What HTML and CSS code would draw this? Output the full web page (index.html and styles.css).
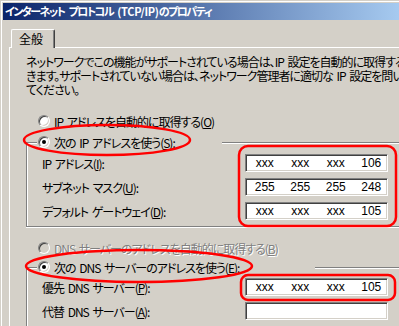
FILE: index.html
```html
<!DOCTYPE html>
<html lang="ja">
<head>
<meta charset="utf-8">
<link rel="stylesheet" href="styles.css">
</head>
<body>
<div class="window">
    <div class="titlebar">インターネット プロトコル <span class="latin">(TCP/IP)</span>のプロパティ</div>

    <div class="tabs">
        <div class="tab">全般</div>
    </div>

    <div class="panel">
        <p class="intro">
            <span>ネットワークでこの機能がサポートされている場合は、IP 設定を自動的に取得することがで</span>
            <span>きます。サポートされていない場合は、ネットワーク管理者に適切な IP 設定を問い合わせ</span>
            <span>てください。</span>
        </p>

        <div class="option first">
            <span class="radio"></span>
            <span>IP アドレスを自動的に取得する(<u>O</u>)</span>
        </div>

        <div class="group">
            <div class="option legend ip-legend">
                <span class="radio checked"></span>
                <span>次の IP アドレスを使う(<u>S</u>):</span>
            </div>
            <div class="row top">
                <span class="label">IP アドレス(<u>I</u>):</span>
                <span class="ipfield"><span>xxx</span><span>xxx</span><span>xxx</span><span>106</span></span>
            </div>
            <div class="row">
                <span class="label">サブネット マスク(<u>U</u>):</span>
                <span class="ipfield"><span>255</span><span>255</span><span>255</span><span>248</span></span>
            </div>
            <div class="row">
                <span class="label">デフォルト ゲートウェイ(<u>D</u>):</span>
                <span class="ipfield"><span>xxx</span><span>xxx</span><span>xxx</span><span>105</span></span>
            </div>
        </div>

        <div class="option disabled">
            <span class="radio"></span>
            <span>DNS サーバーのアドレスを自動的に取得する(<u>B</u>)</span>
        </div>

        <div class="group dns">
            <div class="option legend dns-legend">
                <span class="radio checked"></span>
                <span>次の DNS サーバーのアドレスを使う(<u>E</u>):</span>
            </div>
            <div class="row top-dns">
                <span class="label">優先 DNS サーバー(<u>P</u>):</span>
                <span class="ipfield"><span>xxx</span><span>xxx</span><span>xxx</span><span>105</span></span>
            </div>
            <div class="row">
                <span class="label">代替 DNS サーバー(<u>A</u>):</span>
                <span class="ipfield"></span>
            </div>
        </div>
    </div>
</div>

<!-- red hand-drawn marks over the dialog -->
<svg class="marks" width="399" height="326" viewBox="0 0 399 326">
    <ellipse cx="107" cy="140" rx="83" ry="15"/>
    <rect x="239" y="146" width="157" height="80" rx="9"/>
    <ellipse cx="139" cy="266" rx="113" ry="16"/>
    <rect x="241" y="275" width="154" height="25" rx="7"/>
</svg>
</body>
</html>
```

FILE: styles.css
```css
body {
    margin: 0;
    width: 399px;
    height: 326px;
    overflow: hidden;
    position: relative;
    background-color: #d4d0c8;
    color: #000;
    font-family: "Noto Sans CJK JP", sans-serif;
    font-size: 12px;
    letter-spacing: -1px;
    word-spacing: 2px;
    font-feature-settings: "palt";
}

.window {
    margin: 1px 0 0 1px;
    padding: 1px 0 0 1px;
    border-top: 1px solid #fff;
    border-left: 1px solid #fff;
}

.titlebar {
    height: 17px;
    line-height: 17px;
    padding-left: 2px;
    color: #fff;
    font-size: 11px;
    font-weight: bold;
    letter-spacing: -1.5px;
    word-spacing: 3px;
    white-space: nowrap;
    background: linear-gradient(to right, #0a246a, #a6caf0);
}

.titlebar .latin {
    letter-spacing: -0.3px;
}

.tabs {
    display: flex;
    padding: 9px 0 0 8px;
}

.tab {
    position: relative;
    z-index: 1;
    box-sizing: border-box;
    width: 44px;
    height: 19px;
    margin-bottom: -1px;
    padding: 2px 0 0 7px;
    line-height: 14px;
    letter-spacing: 0;
    background-color: #d4d0c8;
    border-top: 1px solid #fff;
    border-left: 1px solid #fff;
    border-right: 1px solid #404040;
    border-radius: 2px 2px 0 0;
    box-shadow: inset -1px 0 0 #808080;
}

.panel {
    width: 500px;
    margin-left: 6px;
    padding: 7px 0 0 16px;
    border-top: 1px solid #fff;
    border-left: 1px solid #fff;
}

.intro {
    margin: 0;
    line-height: 14px;
    white-space: nowrap;
}

.intro span {
    display: block;
}

.option {
    display: flex;
    align-items: center;
    gap: 4px;
    height: 20px;
    margin-left: 12px;
    white-space: nowrap;
}

.option.first {
    margin-top: 14px;
}

.option.disabled {
    margin-top: 11px;
    color: #808080;
    text-shadow: 1px 1px 0 #fff;
}

.radio {
    position: relative;
    flex: none;
    box-sizing: border-box;
    width: 12px;
    height: 12px;
    border-radius: 50%;
    background-color: #fff;
    border: 1px solid;
    border-color: #808080 #fff #fff #808080;
    box-shadow: inset 1px 1px 0 #404040, inset -1px -1px 0 #d4d0c8;
}

.disabled .radio {
    background-color: #d4d0c8;
}

.radio.checked::after {
    content: "";
    position: absolute;
    left: 3px;
    top: 3px;
    width: 4px;
    height: 4px;
    border-radius: 50%;
    background-color: #000;
}

.group {
    margin-top: 11px;
    padding-bottom: 6px;
    border: 1px solid #808080;
    border-right: none;
    box-shadow: inset 1px 1px 0 #fff, 0 1px 0 #fff;
}

.group.dns {
    margin-top: 9px;
}

.legend {
    margin: -11px 0 0 10px;
    padding-left: 1px;
    background-color: #d4d0c8;
}

.ip-legend {
    width: 184px;
}

.dns-legend {
    width: 277px;
}

.row {
    display: flex;
    align-items: center;
    height: 18px;
    margin-top: 6px;
    padding-left: 15px;
    white-space: nowrap;
}

.row.top {
    margin-top: 2px;
}

.row.top-dns {
    margin-top: 1px;
}

.label {
    width: 203px;
}

.ipfield {
    display: grid;
    grid-template-columns: repeat(4, 35.5px);
    align-items: center;
    justify-items: center;
    box-sizing: border-box;
    width: 143px;
    height: 18px;
    padding-left: 1px;
    background-color: #fff;
    border: 1px solid;
    border-color: #808080 #fff #fff #808080;
    box-shadow: inset 1px 1px 0 #404040, inset -1px -1px 0 #d4d0c8;
    font-family: "Liberation Sans", sans-serif;
    font-size: 12px;
    letter-spacing: 0;
    word-spacing: 0;
}

.marks {
    position: absolute;
    left: 0;
    top: 0;
    pointer-events: none;
}

.marks ellipse,
.marks rect {
    fill: none;
    stroke: #f00;
    stroke-width: 2.5;
}
```
